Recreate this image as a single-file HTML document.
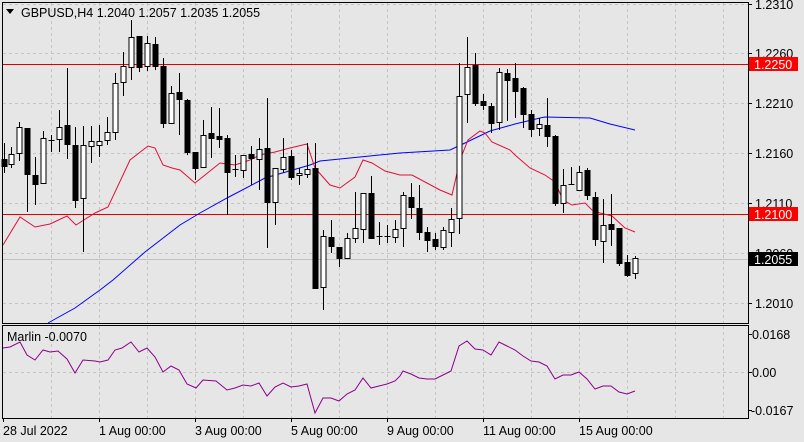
<!DOCTYPE html>
<html><head><meta charset="utf-8"><style>
html,body{margin:0;padding:0;background:#e6e6e6;}
svg{display:block;font-family:"Liberation Sans",sans-serif;}
</style></head><body>
<svg id="s" width="804" height="442" xmlns="http://www.w3.org/2000/svg">
<rect width="804" height="442" fill="#e6e6e6"/>
<g id="grid" stroke="#c4c4c4" stroke-dasharray="3,3" stroke-width="1"></g>
<line x1="3" y1="64.5" x2="748" y2="64.5" stroke="#e00000"/>
<line x1="3" y1="214.5" x2="748" y2="214.5" stroke="#e00000"/>
<line x1="3" y1="259.5" x2="748" y2="259.5" stroke="#c0c0c0"/>
<polyline fill="none" stroke="#0000ff" stroke-width="1" points="48,323 75,308 100,290 113,280 145,252 180,225 200,213 227,198 265,178 310,165 320,161 360,157 400,153 450,150 465,143 490,131 515,124 540,118 545,117 590,118 610,124 635,130"/>
<polyline fill="none" stroke="#e0103a" stroke-width="1" points="3,245 20,217 35,227 50,224 67,216 76,225 95,213 108,207 130,160 148,146 155,148 163,165 172,168 180,170 195,183 220,163 235,165 250,160 260,155 275,152 290,148 307,144 315,168 330,185 340,188 355,177 363,160 372,163 385,171 400,175 412,175 440,190 452,195 460,160 468,140 480,131 485,133 492,142 510,150 515,155 530,168 545,175 555,182 563,200 572,205 585,203 592,210 600,213 612,216 625,228 635,232"/>
<g id="c"></g>
<polyline fill="none" stroke="#8b008b" stroke-width="1" points="3,348 10,347 20,342 27,355 35,360 43,350 50,352 58,351 67,359 75,373 83,360 95,361 100,362 108,360 115,350 122,348 131,342 139,352 147,348 155,357 163,372 171,366 179,370 187,384 196,388 203,380 216,381 227,390 235,388 243,385 251,386 259,383 267,396 275,387 283,383 291,387 299,386 307,384 315,413 323,398 331,398 339,401 347,394 355,390 363,378 371,388 379,386 387,384 395,381 400,376 403,371 411,374 419,378 427,379 435,379 443,375 451,371 459,346 467,341 475,349 483,350 491,355 499,342 507,346 515,350 523,356 531,361 539,362 547,366 555,379 563,375 571,375 579,372 587,379 595,389 603,386 611,386 619,392 627,394 635,391"/>
<rect x="2.5" y="2.5" width="746" height="321" fill="none" stroke="#000"/>
<rect x="2.5" y="325.5" width="746" height="93" fill="none" stroke="#000"/>
<polygon points="6,9 14,9 10,14" fill="#000"/>
<text x="21" y="17" font-size="12.5" fill="#000">GBPUSD,H4  1.2040 1.2057 1.2035 1.2055</text>
<text x="7" y="341" font-size="12.5" fill="#000">Marlin -0.0070</text>
<g font-size="12.5" fill="#000" id="ax">
<text x="755" y="9">1.2310</text>
<text x="755" y="58">1.2260</text>
<text x="755" y="108">1.2210</text>
<text x="755" y="158">1.2160</text>
<text x="755" y="208">1.2110</text>
<text x="755" y="258">1.2060</text>
<text x="755" y="308">1.2010</text>
<text x="752" y="339">0.0168</text>
<text x="752" y="377">0.00</text>
<text x="751" y="415">-0.0167</text>
</g>
<rect x="749" y="57" width="49" height="14" fill="#ff0000"/><text x="754" y="69" font-size="12.5" fill="#fff">1.2250</text>
<rect x="749" y="207" width="49" height="14" fill="#ff0000"/><text x="754" y="219" font-size="12.5" fill="#fff">1.2100</text>
<rect x="749" y="252" width="49" height="14" fill="#000"/><text x="754" y="264" font-size="12.5" fill="#fff">1.2055</text>
<g font-size="12.5" fill="#000">
<text x="3" y="435">28 Jul 2022</text>
<text x="99" y="435">1 Aug 00:00</text>
<text x="195" y="435">3 Aug 00:00</text>
<text x="291" y="435">5 Aug 00:00</text>
<text x="387" y="435">9 Aug 00:00</text>
<text x="483" y="435">11 Aug 00:00</text>
<text x="579" y="435">15 Aug 00:00</text>
</g>
<g id="tk" stroke="#000"></g>
</svg>
<script>
var NS="http://www.w3.org/2000/svg";
function el(p,t,a){var e=document.createElementNS(NS,t);for(var k in a)e.setAttribute(k,a[k]);p.appendChild(e);return e;}
var g=document.getElementById('grid');
for(var i=0;i<15;i++){var x=51.5+48*i;el(g,'line',{x1:x,y1:3,x2:x,y2:323});el(g,'line',{x1:x,y1:326,x2:x,y2:418});}
[4,53,103,153,203,253,303].forEach(function(y){el(g,'line',{x1:3,y1:y+.5,x2:748,y2:y+.5});});
el(g,'line',{x1:3,y1:372.5,x2:748,y2:372.5});
var tk=document.getElementById('tk');
[3,99,195,291,387,483,579].forEach(function(x){el(tk,'line',{x1:x+.5,y1:418,x2:x+.5,y2:422});});
[4,53,103,153,203,253,303,334,372,410].forEach(function(y){el(tk,'line',{x1:748,y1:y+.5,x2:752,y2:y+.5});});
var C=[[4,159,166,143,173,1],[11,154,164,147,168,0],[19,127,153,122,161,0],[27,128,174,128,212,1],[35,175,184,157,205,1],[43,138,183,131,183,0],[51,140,140,135,152,0],[59,127,139,110,152,0],[67,125,144,68,159,1],[75,145,200,127,208,1],[83,145,198,126,252,0],[91,141,146,126,163,0],[99,141,145,125,157,0],[107,132,140,117,145,0],[115,83,132,73,140,0],[123,66,82,52,96,0],[131,37,67,20,80,0],[139,36,67,36,72,1],[147,43,66,36,71,0],[155,44,66,37,70,1],[163,66,123,58,128,1],[171,93,123,86,123,0],[179,92,99,73,135,1],[187,100,152,99,155,1],[195,152,168,152,180,1],[203,135,167,120,167,0],[211,133,138,107,158,1],[219,136,139,108,148,1],[227,138,172,135,215,1],[235,169,169,155,177,0],[243,155,170,155,178,0],[251,154,158,146,185,1],[259,149,159,138,190,0],[267,148,202,98,248,1],[275,168,202,168,225,0],[283,157,169,138,173,0],[291,156,177,150,180,1],[299,173,175,168,185,0],[307,169,174,143,178,0],[315,168,288,143,288,1],[323,236,287,230,310,0],[331,237,246,220,253,1],[339,247,258,247,267,1],[347,238,258,233,258,0],[355,228,238,192,243,0],[363,193,229,193,243,0],[371,193,238,176,238,1],[379,236,236,222,245,0],[387,236,236,225,243,0],[395,229,237,220,243,0],[403,195,228,192,247,0],[411,197,207,183,219,1],[419,208,232,185,240,1],[427,232,240,227,252,1],[435,239,246,233,250,1],[443,230,247,227,250,0],[451,219,232,208,247,0],[459,96,218,63,234,0],[467,67,94,37,123,0],[475,65,103,53,106,1],[483,101,105,94,110,1],[491,106,123,103,133,1],[499,72,122,68,130,0],[507,73,80,69,121,1],[515,78,91,63,118,1],[523,88,114,87,128,1],[531,114,129,110,137,1],[539,124,128,118,136,0],[547,125,136,98,147,1],[555,136,203,135,206,1],[563,185,203,169,213,0],[571,184,184,167,185,0],[579,172,190,166,190,0],[587,170,195,168,200,1],[595,197,239,192,246,1],[603,225,241,199,263,0],[611,224,229,194,246,1],[619,228,263,228,266,1],[627,262,275,255,277,1],[635,258,273,256,279,0]];
var c=document.getElementById('c');
C.forEach(function(d){var x=d[0]+.5;
el(c,'line',{x1:x,y1:d[3],x2:x,y2:d[4],stroke:'#000'});
var h=Math.max(d[2]-d[1],0);
if(h<1){el(c,'line',{x1:x-3,y1:d[1]+.5,x2:x+3,y2:d[1]+.5,stroke:'#000'});}
else el(c,'rect',{x:x-2.5,y:d[1]+.5,width:5,height:h,fill:d[5]?'#000':'#fff',stroke:'#000'});
});
</script>
</body></html>
